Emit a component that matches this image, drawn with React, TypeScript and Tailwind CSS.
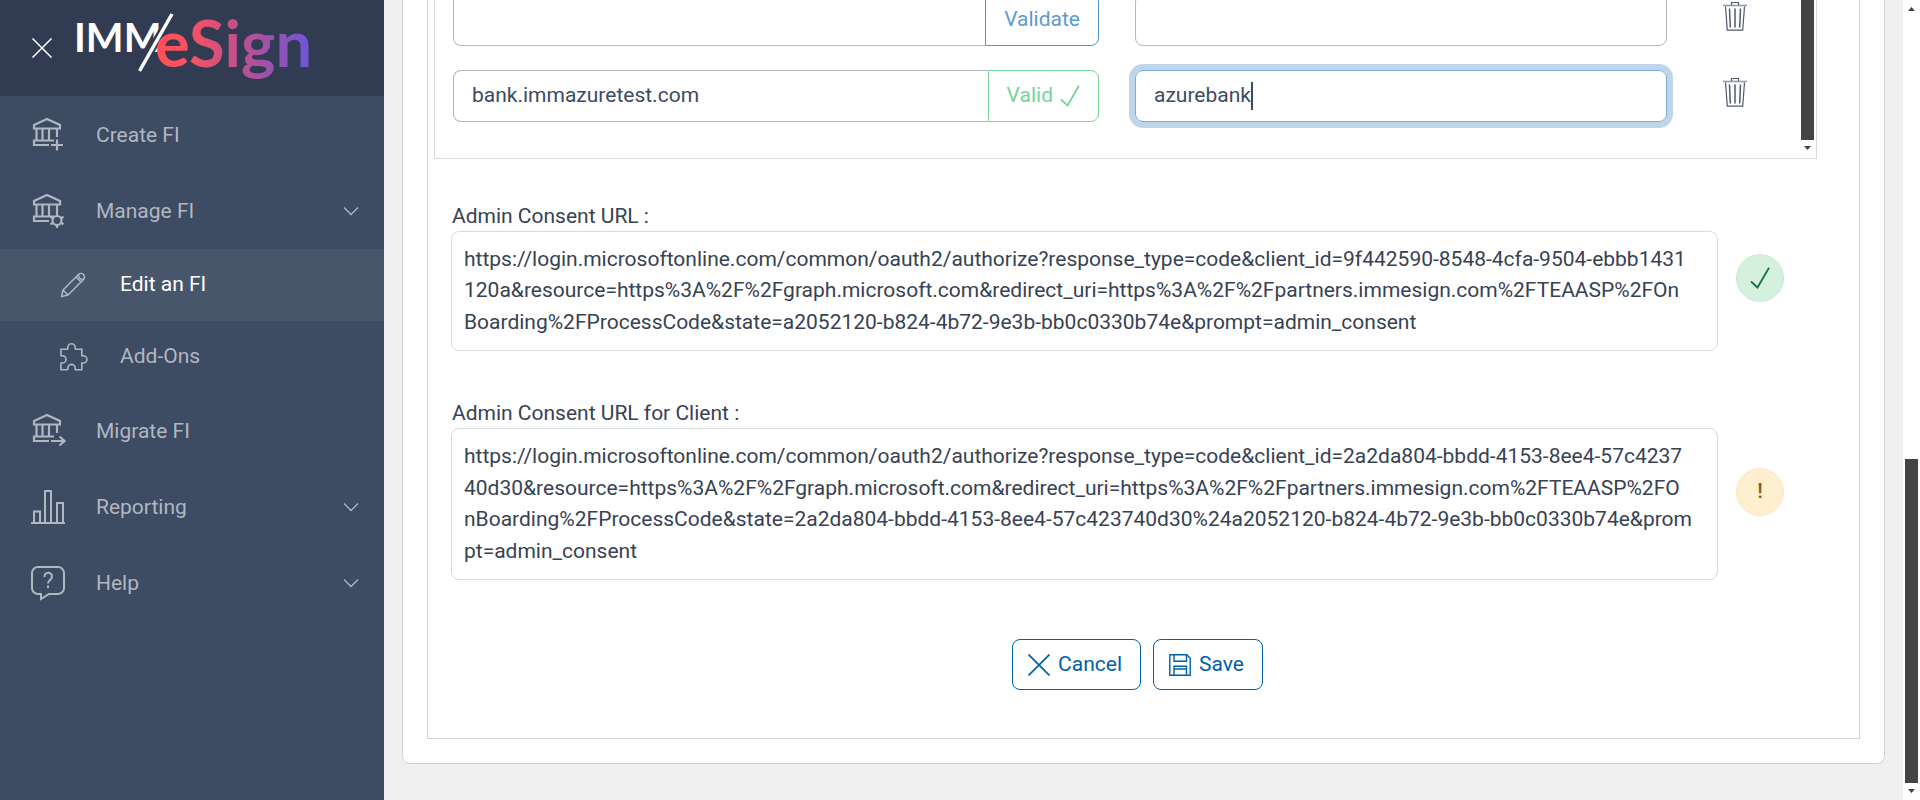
import type { ReactNode } from 'react';

const sans = "font-['Roboto','Liberation_Sans',sans-serif]";

const consentUrls = [
  {
    id: 'admin-consent',
    label: 'Admin Consent URL :',
    lines: [
      'https://login.microsoftonline.com/common/oauth2/authorize?response_type=code&client_id=9f442590-8548-4cfa-9504-ebbb1431',
      '120a&resource=https%3A%2F%2Fgraph.microsoft.com&redirect_uri=https%3A%2F%2Fpartners.immesign.com%2FTEAASP%2FOn',
      'Boarding%2FProcessCode&state=a2052120-b824-4b72-9e3b-bb0c0330b74e&prompt=admin_consent',
    ],
    ok: true,
  },
  {
    id: 'admin-consent-client',
    label: 'Admin Consent URL for Client :',
    lines: [
      'https://login.microsoftonline.com/common/oauth2/authorize?response_type=code&client_id=2a2da804-bbdd-4153-8ee4-57c4237',
      '40d30&resource=https%3A%2F%2Fgraph.microsoft.com&redirect_uri=https%3A%2F%2Fpartners.immesign.com%2FTEAASP%2FO',
      'nBoarding%2FProcessCode&state=2a2da804-bbdd-4153-8ee4-57c423740d30%24a2052120-b824-4b72-9e3b-bb0c0330b74e&prom',
      'pt=admin_consent',
    ],
    ok: false,
  },
];

function Bank({ children }: { children: ReactNode }) {
  return (
    <svg width="36" height="36" viewBox="0 0 36 36" fill="none" stroke="currentColor" strokeWidth="2.200">
      <path d="M4 8 17 2 30 8v3.500H4Z" />
      <path d="M6.500 12v11M12.500 12v11M19 12v11M27 12v8M5 23.500h19M4 22.500v5.500h15" />
      {children}
    </svg>
  );
}

function BankPlus() {
  return (
    <Bank>
      <path d="M27 22.500v11M21 28h12" />
    </Bank>
  );
}

function BankGear() {
  return (
    <Bank>
      <circle cx="27" cy="27.500" r="4.500" fill="#3d4b63" />
      <path d="M27 23v-3M27 32v3M30.900 25.200l2.600-1.500M23.100 29.800l-2.600 1.500M30.900 29.800l2.600 1.500M23.100 25.200l-2.600-1.500" />
    </Bank>
  );
}

function BankArrow() {
  return (
    <Bank>
      <path d="M21 28h13M29.500 23.500 34.500 28l-5 4.500" />
    </Bank>
  );
}

function Bars() {
  return (
    <svg width="36" height="36" viewBox="0 0 36 36" fill="none" stroke="currentColor" strokeWidth="2">
      <path d="M1 34h34M4 34V22.500h6V34M15 34V2h6v32M27 34V14h6v20" />
    </svg>
  );
}

function HelpBubble() {
  return (
    <svg width="36" height="36" viewBox="0 0 36 36" fill="none" stroke="currentColor" strokeWidth="2">
      <path d="M8 2h20a6 6 0 0 1 6 6v15a6 6 0 0 1-6 6h-9l-8 5v-5H8a6 6 0 0 1-6-6V8a6 6 0 0 1 6-6Z" />
      <path d="M14.500 12c0-5.500 7.500-5.500 7.500-.5 0 3.500-4 3.500-4 7M18 20.500V23" />
    </svg>
  );
}

function Pencil() {
  return (
    <svg width="26" height="26" viewBox="0 0 26 26" fill="none" stroke="currentColor" strokeWidth="1.500" strokeLinejoin="round">
      <path d="M1.500 24.500 3 18 18.500 2.500a3.400 3.400 0 0 1 5 5L8 23ZM3 18l5 5M16 5l5 5M18.500 2.500c-.5 3 2 5.500 5 5" />
    </svg>
  );
}

function Puzzle() {
  return (
    <svg width="28" height="28" viewBox="0 0 28 28" fill="none" stroke="currentColor" strokeWidth="1.600">
      <path d="M.9 6.200h6.600c.5-.8.300-1 .3-1.700a3.700 3.700 0 0 1 7.400 0c0 .7-.2.900.3 1.700h6.300v6.300c.8.500 1 .3 1.500.3a3.600 3.600 0 0 1 0 7.200c-.5 0-.7-.2-1.500.3v6.500h-6.300c-.5-.8-.3-1-.3-1.700a3.700 3.700 0 0 0-7.400 0c0 .7.200.9-.3 1.700H.9v-6.500c.8-.5 1-.3 1.500-.3a3.600 3.600 0 0 0 0-7.200c-.5 0-.7.200-1.500-.3Z" />
    </svg>
  );
}

function Chevron() {
  return (
    <svg width="16" height="10" viewBox="0 0 16 10" fill="none" stroke="currentColor" strokeWidth="1.300">
      <path d="M1 1.500 8 8.500 15 1.500" />
    </svg>
  );
}

function Check() {
  return (
    <svg width="20" height="22" viewBox="0 0 20 22" fill="none" stroke="currentColor" strokeWidth="1.800">
      <path d="M1 14.500 7.500 20.500 19 .8" />
    </svg>
  );
}

function Trash() {
  return (
    <svg width="24" height="30" viewBox="0 0 24 30" fill="none" stroke="currentColor">
      <path d="M0 4.500h24" strokeWidth="1.600" opacity="0.600" />
      <path d="M8.500 4V1.500h7V4M2.500 5.500 4.300 29.200h15.400L21.500 5.500" strokeWidth="1.200" />
      <path d="M6.500 7.500 7.300 26.500M12 7.500v19M17.500 7.500 16.700 26.500" strokeWidth="1.500" />
    </svg>
  );
}

function Floppy() {
  return (
    <svg width="22" height="22" viewBox="0 0 22 22" fill="none" stroke="currentColor" strokeWidth="1.400">
      <path d="M.8.8h17l3.400 3.400v17H.8Z" />
      <path d="M5 .8v6.400h12.500V.8M5 21.200v-9h12.500v9M5 15h12.500" />
    </svg>
  );
}

function Logo() {
  return (
    <svg width="240" height="82" viewBox="0 0 240 82" aria-label="IMM/eSign" className="font-['Lato',sans-serif]">
      <defs>
        <linearGradient id="esign" gradientUnits="userSpaceOnUse" x1="84" y1="0" x2="236" y2="0">
          <stop offset="0" stopColor="#ff5058" />
          <stop offset="0.200" stopColor="#fb525d" />
          <stop offset="0.550" stopColor="#c0508c" />
          <stop offset="1" stopColor="#6f55d6" />
        </linearGradient>
      </defs>
      <text x="2" y="52" fontSize="40" fontWeight="700" fill="#fff">IMM</text>
      <path d="M67 71 100 14" stroke="#313b52" strokeWidth="8" />
      <text x="83" y="67" fontSize="65" fontWeight="700" fill="url(#esign)">eSign</text>
      <path d="M67.500 71 100 14" stroke="#fff" strokeWidth="3.500" />
    </svg>
  );
}

const menu = [
  { label: 'Create FI', icon: BankPlus },
  {
    label: 'Manage FI',
    icon: BankGear,
    expandable: true,
    items: [
      { label: 'Edit an FI', icon: Pencil, active: true },
      { label: 'Add-Ons', icon: Puzzle, active: false },
    ],
  },
  { label: 'Migrate FI', icon: BankArrow },
  { label: 'Reporting', icon: Bars, expandable: true },
  { label: 'Help', icon: HelpBubble, expandable: true },
];

function Sidebar() {
  return (
    <aside className="w-96 shrink-0 bg-[#3d4b63] text-[#b1b7c1]">
      <div className="flex h-24 items-center bg-[#313b52]">
        <button type="button" aria-label="Close menu" className="ml-8 text-white">
          <svg width="20" height="20" viewBox="0 0 20 20" fill="none" stroke="currentColor" strokeWidth="1.500">
            <path d="M.5.500l19 19M19.500.5l-19 19" />
          </svg>
        </button>
        <a href="#home" className="ml-5 self-start">
          <Logo />
        </a>
      </div>
      <nav className="pt-px">
        {menu.map((m) => (
          <div key={m.label}>
            <a href="#menu" className="flex h-[76px] items-center pr-[25px] pl-[30px]">
              <m.icon />
              <span className="ml-[30px] flex-1 pt-0.5">{m.label}</span>
              {m.expandable && <Chevron />}
            </a>
            {m.items?.map((s) => (
              <a
                key={s.label}
                href="#menu"
                className={`flex h-[72px] items-center pl-[60px] ${s.active ? 'bg-[#48566b]' : ''}`}
              >
                <span className="w-[60px]">
                  <s.icon />
                </span>
                <span className={s.active ? 'text-white' : ''}>{s.label}</span>
              </a>
            ))}
          </div>
        ))}
      </nav>
    </aside>
  );
}

function DomainRow({ domain, name, valid, focused }: { domain: string; name: string; valid?: boolean; focused?: boolean }) {
  return (
    <div className="mb-6 grid shrink-0 grid-cols-12">
      <div className="col-span-6 flex h-[52px] px-[18px]">
        <input
          aria-label="Domain"
          defaultValue={domain}
          className="min-w-0 flex-1 rounded-l-lg border border-r-0 border-[#b1b7c1] px-[18px] outline-none"
        />
        <button
          type="button"
          className={`flex items-center gap-[7px] rounded-r-lg border px-[18px] ${valid ? 'border-[#77d596] text-[#77d596]' : 'border-[#4f93cb] text-[#5c9bcf]'}`}
        >
          {valid ? 'Valid' : 'Validate'}
          {valid && <Check />}
        </button>
      </div>
      <div className="col-span-5 px-[18px]">
        <div
          className={`flex h-[52px] items-center rounded-lg border px-[18px] ${focused ? 'border-[#7aaed9] ring-6 ring-[#bfd6ea]' : 'border-[#b1b7c1]'}`}
        >
          <input aria-label="Tenant name" defaultValue={name} className="field-sizing-content min-w-0 outline-none" />
          {focused && <span className="h-7 w-0.5 bg-[#3c4b64]" />}
        </div>
      </div>
      <button type="button" aria-label="Delete" className="h-[52px] justify-self-start pb-2 pl-[38px] text-[#4f5a6e]">
        <Trash />
      </button>
    </div>
  );
}

function Arrow({ up }: { up?: boolean }) {
  return (
    <svg width="7" height="4" viewBox="0 0 7 4" fill="#444" className="shrink-0">
      <path d={up ? 'M0 4h7L3.500 0Z' : 'M0 0h7L3.500 4Z'} />
    </svg>
  );
}

export default function App() {
  return (
    <div className={`flex h-screen overflow-hidden bg-[#f0f0f0] text-[21px] leading-normal text-[#3c4b64] ${sans}`}>
      <Sidebar />

      <main className="flex min-w-0 flex-1 flex-col justify-end px-[18px] pb-9">
        <div className="shrink-0 rounded-lg border border-[#d0d0d0] bg-white p-6">
          <div className="border border-[#d0d0d0] pb-12">
            <div className="mr-[42px] ml-1.5 flex h-64 border border-[#d8dbe0]">
              <div className="flex flex-1 flex-col justify-end overflow-hidden pb-3">
                <DomainRow domain="" name="" />
                <DomainRow domain="bank.immazuretest.com" name="azurebank" valid focused />
              </div>
              <div className="flex w-[17px] flex-col items-center pb-2">
                <div className="mb-1.5 w-[13px] flex-1 bg-[#444]" />
                <Arrow />
              </div>
            </div>

            <div className="mt-[47px] flex flex-col gap-[52px] pr-[75px] pl-[23px] text-[#374253]">
              {consentUrls.map((c) => (
                <div key={c.id} className="flex items-center gap-[18px]">
                  <div className="flex-1">
                    <label htmlFor={c.id} className="mb-[5px] block pl-px leading-5">
                      {c.label}
                    </label>
                    <textarea
                      id={c.id}
                      rows={c.lines.length}
                      readOnly
                      value={c.lines.join('\n')}
                      className="block w-full resize-none overflow-hidden rounded-lg border border-[#d8dbe0] px-3 py-3 break-all outline-none"
                    />
                  </div>
                  {c.ok ? (
                    <div className="flex size-12 items-center justify-center rounded-full border border-[#c4ebd1] bg-[#d5f1de] text-[#18753c]">
                      <Check />
                    </div>
                  ) : (
                    <div className="flex size-12 items-center justify-center rounded-full border border-[#fde7c0] bg-[#feefd0] font-medium text-[#815c15]">
                      !
                    </div>
                  )}
                </div>
              ))}
            </div>

            <div className="mt-[59px] flex justify-center gap-3 pr-3 text-[#0061a8]">
              <button type="button" className="flex h-[51px] items-center gap-2 rounded-lg border border-[#0061a8] pr-[18px] pl-[15px]">
                <svg width="22" height="22" viewBox="0 0 22 22" stroke="currentColor" strokeWidth="1.700">
                  <path d="M.5.500l21 21M21.500.5l-21 21" />
                </svg>
                Cancel
              </button>
              <button type="button" className="flex h-[51px] items-center gap-2 rounded-lg border border-[#0061a8] pr-[18px] pl-[15px]">
                <Floppy />
                Save
              </button>
            </div>
          </div>
        </div>
      </main>

      <div className="flex w-[17px] shrink-0 flex-col items-center bg-white py-[7px]">
        <Arrow up />
        <div className="flex-1" />
        <div className="mb-1.5 h-[324px] w-[13px] bg-[#444]" />
        <Arrow />
      </div>
    </div>
  );
}
